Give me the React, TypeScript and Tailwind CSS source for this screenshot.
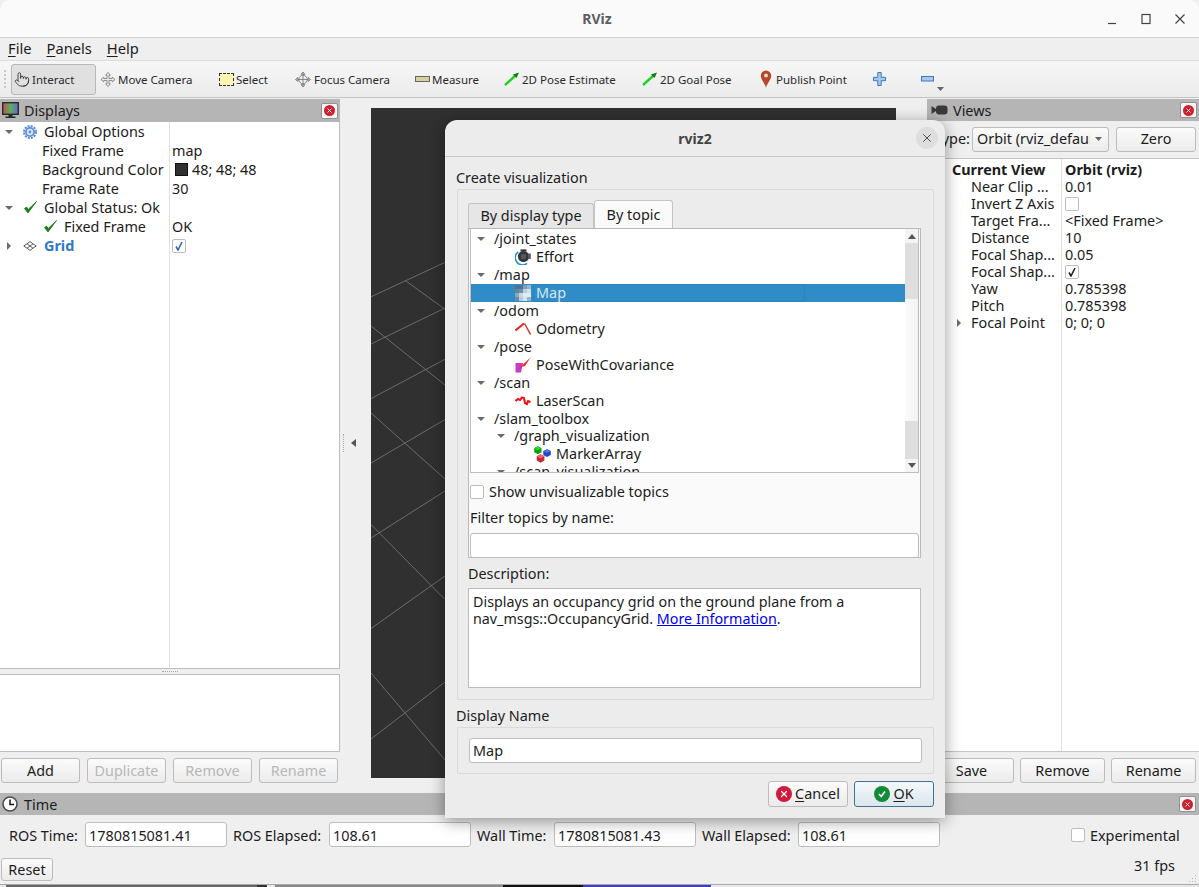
import type { ReactNode } from "react";
import { Pointer, X } from "lucide-react";

const FONT = "font-['Noto_Sans',sans-serif]";

function Arrow({ open, className = "" }: { open: boolean; className?: string }) {
    return (
        <svg width="8" height="8" viewBox="0 0 8 8" className={`shrink-0 ${className}`}>
            {open ? <path d="M0 2h8L4 6z" fill="#6a6a6a" /> : <path d="M2 0v8l4-4z" fill="#6a6a6a" />}
        </svg>
    );
}

function Check({ size = 15 }: { size?: number }) {
    return (
        <svg width={size} height={size} viewBox="0 0 15 15" className="shrink-0">
            <path d="M1.5 8.5 L5 13 L13.5 1.5 L5.2 9.5 L3.5 7 Z" fill="#1f7a1f" stroke="#1f7a1f" strokeWidth="0.8" strokeLinejoin="round" />
        </svg>
    );
}

function CheckBox({ checked, tone = "#2d6db5" }: { checked?: boolean; tone?: string }) {
    return (
        <span className="flex h-[14px] w-[14px] shrink-0 items-center justify-center rounded-[2px] border border-[#bdbdbd] bg-white">
            {checked && (
                <svg width="10" height="10" viewBox="0 0 10 10">
                    <path d="M2 5.5 L4 9 L8 1" fill="none" stroke={tone} strokeWidth="1.6" />
                </svg>
            )}
        </span>
    );
}

function DockClose() {
    return (
        <span className="flex h-[16px] w-[17px] shrink-0 items-center justify-center rounded-[2px] border border-[#929292] bg-[#f6f6f6]">
            <span className="flex h-[11px] w-[11px] items-center justify-center rounded-full bg-[#d01f2e]">
                <X size={7} color="#fff" strokeWidth={3} />
            </span>
        </span>
    );
}

function QtButton({ children, className = "", disabled }: { children: ReactNode; className?: string; disabled?: boolean }) {
    return (
        <div className={`flex items-center justify-center rounded-[3px] border border-[#bcbcbc] bg-gradient-to-b from-[#fbfbfb] to-[#ebebeb] ${disabled ? "text-[#b8b8b8]" : "text-[#1c1c1c]"} ${className}`}>
            {children}
        </div>
    );
}

function TextBox({ value, className = "" }: { value: string; className?: string }) {
    return <div className={`flex h-[25px] items-center rounded-[3px] border border-[#bdbdbd] bg-white pl-[3px] ${className}`}>{value}</div>;
}

function ToolItem({ icon, label, className = "" }: { icon: ReactNode; label: string; className?: string }) {
    return (
        <div className={`flex h-[31px] shrink-0 items-center gap-[2px] text-[11.5px] text-[#2a2a2a] ${className}`}>
            <span className="flex w-[16px] shrink-0 items-center justify-center">{icon}</span>
            <span className="mt-[2px]">{label}</span>
        </div>
    );
}

function MoveIcon() {
    return (
        <svg width="17" height="17" viewBox="0 0 17 17" fill="#f4f4f4" stroke="#777" strokeWidth="0.9">
            <path d="M8.5 1 L11 4 H9.5 V7.5 H13 V6 L16 8.5 L13 11 V9.5 H9.5 V13 H11 L8.5 16 L6 13 H7.5 V9.5 H4 V11 L1 8.5 L4 6 V7.5 H7.5 V4 H6 Z" />
        </svg>
    );
}

function FocusIcon() {
    return (
        <svg width="17" height="17" viewBox="0 0 17 17" fill="none" stroke="#808080" strokeWidth="1">
            <circle cx="8.5" cy="8.5" r="4.5" fill="#eee" />
            <path d="M8.5 2.5 V14.5 M2.5 8.5 H14.5" />
            <path d="M8.5 0.5 L10.5 3 H6.5 Z M8.5 16.5 L10.5 14 H6.5 Z M0.5 8.5 L3 6.5 V10.5 Z M16.5 8.5 L14 6.5 V10.5 Z" fill="#bbb" />
        </svg>
    );
}

function GreenArrow() {
    return (
        <svg width="16" height="14" viewBox="0 0 16 14">
            <path d="M1 13 L11 4" stroke="#1fd01f" strokeWidth="2.4" />
            <path d="M9 2.5 L15 0.5 L12.5 6 Z" fill="#0d7a18" />
        </svg>
    );
}

function PinIcon() {
    return (
        <svg width="12" height="18" viewBox="0 0 12 18">
            <path d="M6 17.5 C4.5 13 0.8 9.5 0.8 5.8 A5.2 5.2 0 0 1 11.2 5.8 C11.2 9.5 7.5 13 6 17.5 Z" fill="#b5472c" />
            <circle cx="6" cy="5.6" r="2" fill="#f3d9b4" />
        </svg>
    );
}

function Gear() {
    return (
        <svg width="14" height="14" viewBox="0 0 14 14" className="shrink-0">
            <circle cx="7" cy="7" r="5" fill="#5d8fd6" />
            <circle cx="7" cy="7" r="6" fill="none" stroke="#5d8fd6" strokeWidth="2" strokeDasharray="2 1.14" />
            <circle cx="7" cy="7" r="3.2" fill="#dbe7f8" />
            <circle cx="7" cy="7" r="1.4" fill="#5d8fd6" />
        </svg>
    );
}

function GridIcon() {
    return (
        <svg width="14" height="10" viewBox="0 0 14 10" className="shrink-0" fill="none" stroke="#5a5a5a" strokeWidth="1">
            <path d="M7 0.7 L13.2 5 L7 9.3 L0.8 5 Z M4 2.8 L10 7.2 M10 2.8 L4 7.2" />
        </svg>
    );
}

function MonitorIcon() {
    return (
        <svg width="17" height="17" viewBox="0 0 17 17" className="shrink-0">
            <defs>
                <linearGradient id="screen" x1="0" y1="0" x2="1" y2="0">
                    <stop offset="0" stopColor="#d0484f" />
                    <stop offset="0.5" stopColor="#54b35c" />
                    <stop offset="1" stopColor="#6a63c9" />
                </linearGradient>
            </defs>
            <rect x="0.7" y="0.7" width="15.6" height="11.6" fill="url(#screen)" stroke="#2a2a2a" strokeWidth="1.4" />
            <path d="M6.5 13 h4 v1.6 h3 v1.4 h-10 v-1.4 h3 z" fill="#2a2a2a" />
        </svg>
    );
}

function CameraIcon() {
    return (
        <svg width="17" height="12" viewBox="0 0 17 12" className="shrink-0">
            <path d="M0.5 2 L5 5 V7 L0.5 10 Z" fill="#3a3a3a" />
            <rect x="5" y="1.5" width="11.5" height="9" rx="3" fill="#3a3a3a" />
        </svg>
    );
}

function ClockIcon() {
    return (
        <svg width="16" height="16" viewBox="0 0 16 16" className="shrink-0">
            <circle cx="8" cy="8" r="7" fill="#fff" stroke="#4d4d4d" strokeWidth="1.6" />
            <path d="M8 3.5 V8.5 H12" fill="none" stroke="#111" strokeWidth="1.5" />
        </svg>
    );
}

function EffortIcon() {
    return (
        <svg width="16" height="16" viewBox="0 0 16 16" className="shrink-0">
            <path d="M3.2 2.8 A7 7 0 0 0 2.2 13.4 A7 7 0 0 0 12 14.4" fill="none" stroke="#1e8fe0" strokeWidth="1.6" />
            <circle cx="8.5" cy="7.5" r="5.6" fill="#33373c" />
            <circle cx="8.5" cy="7.5" r="2.8" fill="#54595f" />
            <rect x="5.5" y="0.4" width="6" height="2.2" fill="#33373c" />
            <rect x="13" y="4.5" width="2.8" height="5.5" fill="#5a5a5a" />
        </svg>
    );
}

function MapIcon() {
    const cells = ["#4f7592", "#4f7592", "#7f9db3", "#9cb6c8", "#5f83a0", "#6f90a8", "#b9cfdd", "#cfe0ea", "#8ca8bc", "#c3d7e4", "#dfecf4", "#dfecf4", "#6a8ca6", "#b3cbda", "#d5e5ee", "#9cb6c8"];
    return (
        <span className="grid h-[16px] w-[16px] shrink-0 grid-cols-4">
            {cells.map((c, i) => (
                <span key={i} style={{ background: c }} />
            ))}
        </span>
    );
}

function OdomIcon() {
    return (
        <svg width="16" height="14" viewBox="0 0 16 14" className="shrink-0">
            <path d="M0.5 8.5 L9 1.5" stroke="#f0241c" strokeWidth="2" />
            <path d="M9.5 1.5 L15.5 12.5" stroke="#d93a30" strokeWidth="1.5" />
        </svg>
    );
}

function PoseIcon() {
    return (
        <svg width="16" height="16" viewBox="0 0 16 16" className="shrink-0">
            <path d="M0.5 6 H8 L6 15.5 H0.5 Z" fill="#c93bc9" />
            <path d="M2 13 L15.5 0.5 L10 9 L6 10 Z" fill="#ee2a1c" />
        </svg>
    );
}

function ScanIcon() {
    return (
        <svg width="16" height="10" viewBox="0 0 16 10" className="shrink-0">
            <path d="M0.5 5 L3 3 L5 4 L7 1.5 L9 2 L10 7 L12 8 L13 5 L15.5 6" fill="none" stroke="#ee1111" strokeWidth="2" />
        </svg>
    );
}

function MarkerIcon() {
    return (
        <svg width="17" height="17" viewBox="0 0 17 17" className="shrink-0">
            <path d="M3.8 0.3 L7.5 2.2 V6.2 L3.8 8.2 L0.2 6.2 V2.2 Z" fill="#0e9e0e" />
            <path d="M3.8 0.3 L7.5 2.2 L3.8 4.2 L0.2 2.2 Z" fill="#22dd22" />
            <path d="M13 3.2 L16.8 5.1 V9 L13 11 L9.3 9 V5.1 Z" fill="#2446c4" />
            <path d="M13 3.2 L16.8 5.1 L13 7 L9.3 5.1 Z" fill="#4f74ee" />
            <path d="M6.5 8.2 L10.4 10.2 V14.6 L6.5 16.8 L2.7 14.6 V10.2 Z" fill="#c62a38" />
            <path d="M6.5 8.2 L10.4 10.2 L6.5 12.2 L2.7 10.2 Z" fill="#ee6a72" />
        </svg>
    );
}

function TopicRow({ level, label, icon, selected, className = "" }: { level: number; label: string; icon?: ReactNode; selected?: boolean; className?: string }) {
    return (
        <div className={`flex h-[18px] shrink-0 items-center ${selected ? "bg-[#308cc6] text-[#d6e8f5]" : ""} ${className}`}>
            {icon ? (
                <>
                    <span className={`flex w-[16px] justify-center ${level === 1 ? "ml-[44px]" : "ml-[63px]"}`}>{icon}</span>
                    {selected ? (
                        <span className="ml-[2px] h-full w-[272px] border border-[#2c84bb] pl-[2px] leading-[16px]">{label}</span>
                    ) : (
                        <span className={level === 1 ? "ml-[5px]" : "ml-[6px]"}>{label}</span>
                    )}
                </>
            ) : (
                <>
                    <Arrow open className={level === 0 ? "ml-[6px]" : "ml-[26px]"} />
                    <span className="ml-[9px]">{label}</span>
                </>
            )}
        </div>
    );
}

const gridLines = [
    [371, 296.8, 445, 262.4],
    [405, 280.3, 445, 309.3],
    [371, 344, 445, 308],
    [371, 326, 445, 385],
    [371, 398.6, 445, 359.3],
    [371, 413, 445, 479],
    [371, 463, 445, 419.5],
    [371, 538, 445, 491],
    [371, 524.5, 445, 599.5],
    [371, 628.5, 445, 576],
    [371, 673, 445, 760],
    [371, 739, 445, 682],
];

const viewRows: [string, ReactNode][] = [
    ["Near Clip ...", "0.01"],
    ["Invert Z Axis", <CheckBox key="z" />],
    ["Target Fra...", "<Fixed Frame>"],
    ["Distance", "10"],
    ["Focal Shap...", "0.05"],
    ["Focal Shap...", <CheckBox key="f" checked tone="#222" />],
    ["Yaw", "0.785398"],
    ["Pitch", "0.785398"],
    ["Focal Point", "0; 0; 0"],
];

function CreateDialog() {
    return (
        <div className="absolute left-[445px] top-[120px] flex h-[698px] w-[500px] flex-col rounded-t-[12px] bg-[#ececec] shadow-[0_3px_16px_rgba(0,0,0,0.4)]">
            <div className="flex h-[37px] shrink-0 items-center justify-center rounded-t-[12px] border-b border-[#c9c9c9]">
                <span className="text-[14px] font-bold text-[#444]">rviz2</span>
                <span className="absolute left-[471px] top-[7px] flex h-[22px] w-[22px] items-center justify-center rounded-full bg-[#dedede]">
                    <X size={14} color="#444" strokeWidth={1.6} />
                </span>
            </div>
            <div className="flex grow flex-col pl-[12px] pr-[11px]">
                <div className="-ml-[1px] flex h-[32px] shrink-0 items-end">Create visualization</div>
                <div className="flex h-[511px] shrink-0 flex-col rounded-[2px] border border-[#dadada] px-[10px] pt-[10px]">
                    <div className="flex h-[28px] shrink-0 items-end">
                        <div className="flex h-[25px] w-[126px] items-center justify-center rounded-t-[3px] border border-b-0 border-[#c4c4c4] bg-[#e6e6e6]">By display type</div>
                        <div className="flex h-[28px] w-[79px] items-center justify-center rounded-t-[3px] border border-b-0 border-[#c4c4c4] bg-[#fafafa]">By topic</div>
                    </div>
                    <div className="flex h-[330px] w-[453px] shrink-0 flex-col border border-[#b9b9b9] bg-[#fafafa] pl-[1px] pr-[1px]">
                        <div className="flex h-[244px] w-[449px] shrink-0 border border-t-0 border-[#bcbcbc] bg-white">
                            <div className="flex grow flex-col overflow-hidden pt-[1px]">
                                <TopicRow level={0} label="/joint_states" />
                                <TopicRow level={1} label="Effort" icon={<EffortIcon />} />
                                <TopicRow level={0} label="/map" />
                                <TopicRow level={1} label="Map" icon={<MapIcon />} selected />
                                <TopicRow level={0} label="/odom" />
                                <TopicRow level={1} label="Odometry" icon={<OdomIcon />} />
                                <TopicRow level={0} label="/pose" />
                                <TopicRow level={1} label="PoseWithCovariance" icon={<PoseIcon />} />
                                <TopicRow level={0} label="/scan" />
                                <TopicRow level={1} label="LaserScan" icon={<ScanIcon />} />
                                <TopicRow level={0} label="/slam_toolbox" />
                                <TopicRow level={2} label="/graph_visualization" className="-mt-[1px]" />
                                <TopicRow level={3} label="MarkerArray" icon={<MarkerIcon />} />
                                <TopicRow level={2} label="/scan_visualization" />
                            </div>
                            <div className="flex w-[13px] shrink-0 flex-col bg-[#dedede]">
                                <div className="flex h-[14px] items-center justify-center bg-[#f4f4f4]">
                                    <svg width="8" height="5" viewBox="0 0 8 5"><path d="M4 0 L8 5 H0 Z" fill="#555" /></svg>
                                </div>
                                <div className="mt-[56px] h-[122px] bg-gradient-to-r from-[#fcfcfc] to-[#f2f2f2]" />
                                <div className="mt-auto flex h-[13px] items-center justify-center bg-[#f4f4f4]">
                                    <svg width="8" height="5" viewBox="0 0 8 5"><path d="M4 5 L8 0 H0 Z" fill="#555" /></svg>
                                </div>
                            </div>
                        </div>
                        <div className="mt-[11px] flex h-[15px] shrink-0 items-center gap-[5px]">
                            <CheckBox />
                            <span>Show unvisualizable topics</span>
                        </div>
                        <div className="mt-[9px] h-[20px] shrink-0 leading-[20px]">Filter topics by name:</div>
                        <TextBox value="" className="mt-[5px] w-[449px] shrink-0" />
                    </div>
                    <div className="mt-[6px] h-[20px] shrink-0 leading-[20px]">Description:</div>
                    <div className="mt-[4px] h-[100px] w-[453px] shrink-0 border border-[#bcbcbc] bg-white px-[4px] pt-[4px] text-[14.3px] leading-[17px]">
                        Displays an occupancy grid on the ground plane from a
                        <br />
                        nav_msgs::OccupancyGrid. <span className="text-[#0000ee] underline">More Information</span>.
                    </div>
                </div>
                <div className="-ml-[1px] flex h-[27px] shrink-0 items-end">Display Name</div>
                <div className="flex h-[47px] shrink-0 items-center rounded-[2px] border border-[#dadada] px-[11px]">
                    <TextBox value="Map" className="w-[453px]" />
                </div>
                <div className="mt-[7px] flex justify-end gap-[6px]">
                    <QtButton className="h-[26px] w-[80px] gap-[3px]">
                        <span className="flex h-[16px] w-[16px] items-center justify-center rounded-full bg-[#d3193a]">
                            <X size={10} color="#fff" strokeWidth={3} />
                        </span>
                        <span><span className="underline underline-offset-2">C</span>ancel</span>
                    </QtButton>
                    <QtButton className="h-[26px] w-[80px] gap-[3px] !border-[#3f7396] !from-[#f4f8fb] !to-[#dde6ec]">
                        <span className="flex h-[16px] w-[16px] items-center justify-center rounded-full bg-[#138a36]">
                            <svg width="10" height="10" viewBox="0 0 10 10"><path d="M2 5 L4.2 7.5 L8 2.5" fill="none" stroke="#fff" strokeWidth="1.6" /></svg>
                        </span>
                        <span><span className="underline underline-offset-2">O</span>K</span>
                    </QtButton>
                </div>
            </div>
        </div>
    );
}

export default function App() {
    return (
        <div className={`relative flex h-[887px] w-[1199px] flex-col overflow-hidden bg-[#efefef] text-[14.4px] text-[#1c1c1c] ${FONT}`}>
            {/* Window title bar */}
            <div className="relative flex h-[38px] shrink-0 items-center justify-center rounded-t-[10px] border-b border-[#d2d2d2] bg-[#fafafa] pr-[5px]">
                <span className="text-[14px] font-bold text-[#5e5e5e]">RViz</span>
                <div className="absolute right-[12px] top-[12px] flex items-center gap-[20px]">
                    <svg width="14" height="14" viewBox="0 0 14 14"><path d="M3 11.5 H11" stroke="#444" strokeWidth="1.2" /></svg>
                    <svg width="14" height="14" viewBox="0 0 14 14"><rect x="3" y="2.5" width="8" height="9" fill="none" stroke="#444" strokeWidth="1.2" /></svg>
                    <svg width="14" height="14" viewBox="0 0 14 14"><path d="M2.5 2.5 L11.5 11.5 M11.5 2.5 L2.5 11.5" stroke="#444" strokeWidth="1.2" /></svg>
                </div>
            </div>

            {/* Menu bar */}
            <div className="flex h-[22px] shrink-0 items-center gap-[15px] pb-[2px] pl-[8px] text-[14.7px]">
                <span><span className="underline underline-offset-2">F</span>ile</span>
                <span><span className="underline underline-offset-2">P</span>anels</span>
                <span><span className="underline underline-offset-2">H</span>elp</span>
            </div>

            {/* Tool bar */}
            <div className="relative flex h-[38px] shrink-0 items-center border-y border-[#c4c4c4] border-t-[#dcdcdc] bg-gradient-to-b from-[#f7f7f7] to-[#ebebeb] pl-[4px]">
                <span className="mr-[5px] h-[18px] w-[2px] border-l-2 border-dotted border-[#c8c8c8]" />
                <ToolItem className="w-[85px] rounded-[3px] border border-[#b8b8b8] bg-[#e0e0e0] pl-[2px]" icon={<Pointer size={19} strokeWidth={1.2} color="#222" />} label="Interact" />
                <ToolItem className="ml-[4px] w-[118px]" icon={<MoveIcon />} label="Move Camera" />
                <ToolItem className="w-[77px]" icon={<span className="h-[13px] w-[15px] border border-dashed border-[#333] bg-[#fbf5b5]" />} label="Select" />
                <ToolItem className="w-[119px] gap-[3px]" icon={<FocusIcon />} label="Focus Camera" />
                <ToolItem className="w-[90px]" icon={<span className="h-[6px] w-[15px] border border-[#666] bg-[#d8cf9c]" />} label="Measure" />
                <ToolItem className="w-[138px]" icon={<GreenArrow />} label="2D Pose Estimate" />
                <ToolItem className="w-[116px]" icon={<GreenArrow />} label="2D Goal Pose" />
                <ToolItem className="w-[115px] gap-0" icon={<PinIcon />} label="Publish Point" />
                <svg width="13" height="14" viewBox="0 0 13 14" className="shrink-0"><path d="M4.8 0.5 H8.2 V5.3 H12.5 V8.7 H8.2 V13.5 H4.8 V8.7 H0.5 V5.3 H4.8 Z" fill="#a8c8ee" stroke="#3d78bd" /></svg>
                <svg width="13" height="6" viewBox="0 0 13 6" className="ml-[35px] shrink-0"><rect x="0.5" y="0.5" width="12" height="4.5" fill="#a8c8ee" stroke="#3d78bd" /></svg>
                <svg width="7" height="5" viewBox="0 0 7 5" className="ml-[3px] mt-[20px] shrink-0"><path d="M0 0 H7 L3.5 4 Z" fill="#666" /></svg>
            </div>

            {/* Main area */}
            <div className="flex min-h-0 grow">
                {/* Displays dock */}
                <div className="flex w-[340px] shrink-0 flex-col pt-[1px]">
                    <div className="flex h-[23px] shrink-0 items-center bg-[#b5b5b5] pl-[2px] pr-[2px]">
                        <MonitorIcon />
                        <span className="ml-[5px] grow">Displays</span>
                        <DockClose />
                    </div>
                    <div className="flex min-h-0 grow border-b border-r border-[#bdbdbd] bg-white">
                        <div className="w-[170px] shrink-0 border-r border-[#e0e0e0]">
                            <div className="flex h-[19px] items-center pl-[5px]">
                                <Arrow open />
                                <span className="ml-[10px]"><Gear /></span>
                                <span className="ml-[7px]">Global Options</span>
                            </div>
                            <div className="flex h-[19px] items-center pl-[42px]">Fixed Frame</div>
                            <div className="flex h-[19px] items-center pl-[42px]">Background Color</div>
                            <div className="flex h-[19px] items-center pl-[42px]">Frame Rate</div>
                            <div className="flex h-[19px] items-center pl-[5px]">
                                <Arrow open />
                                <span className="ml-[10px]"><Check /></span>
                                <span className="ml-[6px]">Global Status: Ok</span>
                            </div>
                            <div className="flex h-[19px] items-center pl-[43px]">
                                <Check />
                                <span className="ml-[6px]">Fixed Frame</span>
                            </div>
                            <div className="flex h-[19px] items-center pl-[5px]">
                                <Arrow open={false} />
                                <span className="ml-[10px]"><GridIcon /></span>
                                <span className="ml-[7px] font-bold text-[#2d78c8]">Grid</span>
                            </div>
                        </div>
                        <div className="grow pl-[2px]">
                            <div className="h-[19px]" />
                            <div className="flex h-[19px] items-center">map</div>
                            <div className="flex h-[19px] items-center gap-[4px] pl-[3px]">
                                <span className="h-[13px] w-[13px] border border-[#111] bg-[#303030]" />
                                48; 48; 48
                            </div>
                            <div className="flex h-[19px] items-center">30</div>
                            <div className="h-[19px]" />
                            <div className="flex h-[19px] items-center">OK</div>
                            <div className="flex h-[19px] items-center"><CheckBox checked /></div>
                        </div>
                    </div>
                    <div className="flex h-[5px] shrink-0 items-center justify-center">
                        <span className="w-[16px] border-t border-dotted border-[#aaa]" />
                    </div>
                    <div className="h-[78px] shrink-0 border border-l-0 border-[#bdbdbd] bg-white" />
                    <div className="mb-[10px] ml-[1px] mt-[6px] flex shrink-0 gap-[7px]">
                        <QtButton className="h-[25px] w-[79px]">Add</QtButton>
                        <QtButton disabled className="h-[25px] w-[79px]">Duplicate</QtButton>
                        <QtButton disabled className="h-[25px] w-[79px]">Remove</QtButton>
                        <QtButton disabled className="h-[25px] w-[79px]">Rename</QtButton>
                    </div>
                </div>

                {/* Collapse handle */}
                <div className="flex w-[31px] shrink-0 items-center pb-[6px] pl-[3px]">
                    <span className="h-[18px] w-0 border-l border-dotted border-[#aaa]" />
                    <svg width="6" height="8" viewBox="0 0 6 8" className="ml-[7px]"><path d="M5 0 V8 L0 4 Z" fill="#555" /></svg>
                </div>

                {/* 3D view */}
                <div className="mb-[15px] mt-[10px] w-[525px] shrink-0 bg-[#303030]">
                    <svg width="525" height="670" viewBox="371 108 525 670">
                        {gridLines.map(([x1, y1, x2, y2], i) => (
                            <line key={i} x1={x1} y1={y1} x2={x2} y2={y2} stroke="#6c6c6c" strokeWidth="1" />
                        ))}
                    </svg>
                </div>
                <div className="w-[31px] shrink-0" />

                {/* Views dock */}
                <div className="flex grow flex-col pt-[1px]">
                    <div className="flex h-[22px] shrink-0 items-center bg-[#b5b5b5] pl-[4px] pr-[2px]">
                        <CameraIcon />
                        <span className="ml-[5px] grow pt-[2px]">Views</span>
                        <DockClose />
                    </div>
                    <div className="flex h-[38px] shrink-0 items-center border-b border-[#c4c4c4] pb-[1px] pl-[7px] pr-[3px]">
                        <span className="w-[38px]">Type:</span>
                        <div className="flex h-[25px] w-[137px] items-center rounded-[3px] border border-[#bcbcbc] bg-gradient-to-b from-[#fbfbfb] to-[#ebebeb] pl-[4px] pr-[6px]">
                            <span className="w-[113px] overflow-hidden whitespace-nowrap">Orbit (rviz_default)</span>
                            <svg width="7" height="4" viewBox="0 0 7 4" className="ml-auto"><path d="M0 0 H7 L3.5 4 Z" fill="#666" /></svg>
                        </div>
                        <QtButton className="ml-[7px] h-[25px] w-[80px]">Zero</QtButton>
                    </div>
                    <div className="flex h-[593px] shrink-0 border-b border-[#c4c4c4] bg-white">
                        <div className="w-[135px] shrink-0 border-r border-[#e0e0e0] pt-[2px]">
                            <div className="flex h-[17px] items-center pl-[25px] font-bold">Current View</div>
                            {viewRows.map(([name], i) => (
                                <div key={i} className="flex h-[17px] items-center pl-[44px]">
                                    {i === 8 && <Arrow open={false} className="-ml-[16px] mr-[8px]" />}
                                    <span className="whitespace-nowrap">{name}</span>
                                </div>
                            ))}
                        </div>
                        <div className="grow pl-[3px] pt-[2px]">
                            <div className="flex h-[17px] items-center font-bold">Orbit (rviz)</div>
                            {viewRows.map(([, value], i) => (
                                <div key={i} className="flex h-[17px] items-center">{value}</div>
                            ))}
                        </div>
                    </div>
                    <div className="mt-[6px] flex justify-end gap-[6px] pr-[3px]">
                        <QtButton className="h-[25px] w-[85px]">Save</QtButton>
                        <QtButton className="h-[25px] w-[85px]">Remove</QtButton>
                        <QtButton className="h-[25px] w-[85px]">Rename</QtButton>
                    </div>
                </div>
            </div>

            {/* Time panel */}
            <div className="flex h-[91px] shrink-0 flex-col">
                <div className="flex h-[22px] shrink-0 items-center bg-[#b5b5b5] pl-[2px] pr-[3px]">
                    <ClockIcon />
                    <span className="ml-[6px] grow pt-[2px]">Time</span>
                    <DockClose />
                </div>
                <div className="mt-[7px] flex h-[25px] shrink-0 items-center pl-[9px]">
                    <span className="w-[76px] whitespace-nowrap pt-[2px]">ROS Time:</span>
                    <TextBox value="1780815081.41" className="w-[142px] pt-[2px]" />
                    <span className="ml-[6px] w-[96px] whitespace-nowrap pt-[2px]">ROS Elapsed:</span>
                    <TextBox value="108.61" className="w-[142px] pt-[2px]" />
                    <span className="ml-[6px] w-[77px] whitespace-nowrap pt-[2px]">Wall Time:</span>
                    <TextBox value="1780815081.43" className="w-[142px] pt-[2px]" />
                    <span className="ml-[6px] w-[96px] whitespace-nowrap pt-[2px]">Wall Elapsed:</span>
                    <TextBox value="108.61" className="w-[142px] pt-[2px]" />
                    <span className="ml-[131px]"><CheckBox /></span>
                    <span className="ml-[5px] pt-[2px]">Experimental</span>
                </div>
                <div className="flex grow items-end justify-between pb-[3px] pl-[1px] pr-[24px]">
                    <QtButton className="h-[23px] w-[52px]">Reset</QtButton>
                    <span className="pb-[4px]">31 fps</span>
                </div>
            </div>

            {/* Desktop visible below the window */}
            <div className="flex h-[3px] shrink-0 border-t border-[#a8a8a8] bg-[#e8e8e8]">
                <div className="ml-[6px] w-[251px] bg-[#666]" />
                <div className="w-[10px] bg-[#333]" />
                <div className="ml-[8px] w-[228px] bg-[#8a8a8a]" />
                <div className="w-[80px] bg-[#111]" />
                <div className="w-[128px] bg-[#3f3fc0]" />
            </div>

            {/* Window resize grip */}
            <svg width="8" height="8" viewBox="0 0 8 8" className="absolute bottom-[4px] right-[2px]">
                <path d="M6 0h1v1H6z M3 3h1v1H3z M6 3h1v1H6z M0 6h1v1H0z M3 6h1v1H3z M6 6h1v1H6z" fill="#b8b8b8" />
            </svg>

            <CreateDialog />
        </div>
    );
}
